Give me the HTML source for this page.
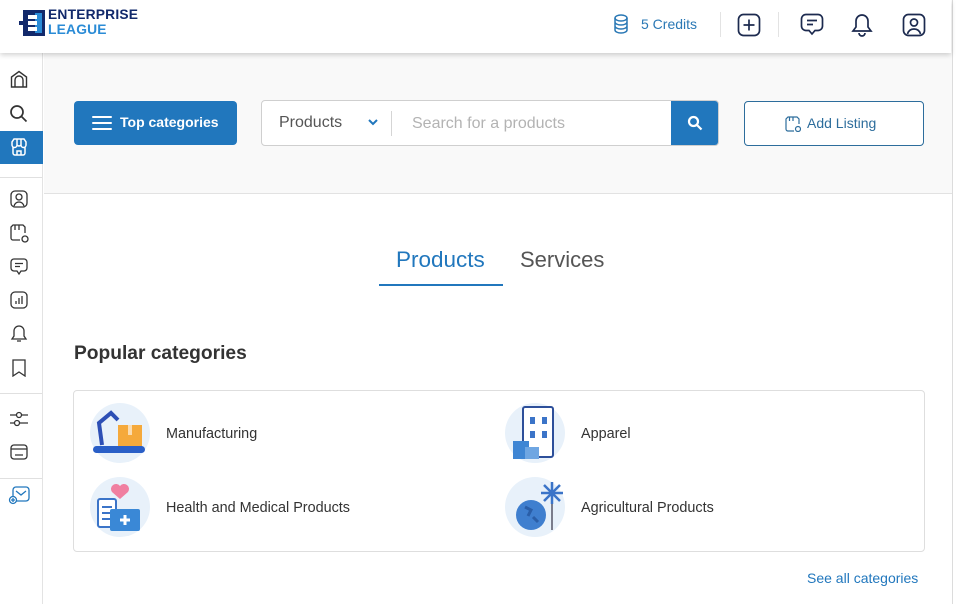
<!DOCTYPE html>
<html><head><meta charset="utf-8"><style>
*{box-sizing:border-box;margin:0;padding:0}
body{width:956px;height:604px;overflow:hidden;background:#fff;font-family:"Liberation Sans",sans-serif;position:relative;color:#333}
.abs{position:absolute}
#hdr{left:0;top:0;width:951px;height:53px;background:#fff;box-shadow:0 2px 5px rgba(0,0,0,.18);z-index:5}
#side{left:0;top:53px;width:43px;height:551px;background:#fff;border-right:1px solid #e3e3e3}
#band{left:44px;top:53px;width:908px;height:141px;background:#f9f9f9;border-bottom:1px solid #e2e2e2}
#rline{left:952px;top:0;width:1px;height:604px;background:#dcdcdc}
.ico{position:absolute}
.hr{position:absolute;left:0;width:42px;height:1px;background:#e0e0e0}
.cat{position:absolute;font-size:14.4px;color:#333}
.circ{position:absolute;width:60px;height:60px;border-radius:50%;background:#e8f1fa}
</style></head><body>
<div id="rline" class="abs"></div>
<div id="hdr" class="abs">
 <svg class="ico" style="left:19px;top:9px" width="28" height="28" viewBox="0 0 28 28">
  <rect x="4" y="1" width="22" height="26" fill="#12296b"/><rect x="16" y="4" width="7" height="20" fill="#2a8bd6"/>
  <rect x="9" y="6" width="9" height="4" fill="#fff"/><rect x="9" y="12" width="9" height="4" fill="#fff"/><rect x="9" y="18" width="9" height="4" fill="#fff"/>
  <rect x="0" y="12" width="6" height="4" fill="#12296b"/>
 </svg>
 <div class="abs" style="left:48px;top:8px;font-weight:bold;font-size:13.8px;line-height:14px;color:#12296b;letter-spacing:.2px">ENTERPRISE</div>
 <div class="abs" style="left:48px;top:23px;font-weight:bold;font-size:13.8px;line-height:14px;color:#2a8bd6;letter-spacing:.2px">LEAGUE</div>
 <svg class="ico" style="left:613px;top:14px" width="16" height="21" viewBox="0 0 16 21" fill="none" stroke="#2a78b5" stroke-width="1.5"><ellipse cx="8" cy="4" rx="6" ry="3"/><path d="M2 4v12c0 1.7 2.7 3 6 3s6-1.3 6-3V4M2 8c0 1.7 2.7 3 6 3s6-1.3 6-3M2 12c0 1.7 2.7 3 6 3s6-1.3 6-3"/></svg>
 <div class="abs" style="left:641px;top:16px;font-size:14px;color:#2a78b5">5 Credits</div>
 <div class="abs" style="left:720px;top:12px;width:1px;height:25px;background:#e3e3e3"></div>
 <div class="abs" style="left:778px;top:12px;width:1px;height:25px;background:#e3e3e3"></div>
 <svg class="ico" style="left:737px;top:13px" width="24" height="24" viewBox="0 0 24 24" fill="none" stroke="#1c2a4f" stroke-width="1.7"><rect x="1.5" y="1.5" width="21" height="21" rx="5"/><path d="M12 6.5v11M6.5 12h11"/></svg>
 <svg class="ico" style="left:800px;top:13px" width="24" height="24" viewBox="0 0 24 24" fill="none" stroke="#1c2a4f" stroke-width="1.7"><path d="M6 1.5h12a4.5 4.5 0 0 1 4.5 4.5v7a4.5 4.5 0 0 1-4.5 4.5h-3l-3 3.5-3-3.5H6A4.5 4.5 0 0 1 1.5 13V6A4.5 4.5 0 0 1 6 1.5z"/><path d="M7 7.5h10M7 11.5h6"/></svg>
 <svg class="ico" style="left:851px;top:13px" width="22" height="24" viewBox="0 0 22 24" fill="none" stroke="#1c2a4f" stroke-width="1.7"><path d="M11 2a6 6 0 0 1 6 6v6l3 4H2l3-4V8a6 6 0 0 1 6-6zM8 20a3 3 0 0 0 6 0"/></svg>
 <svg class="ico" style="left:902px;top:13px" width="24" height="24" viewBox="0 0 24 24" fill="none" stroke="#1c2a4f" stroke-width="1.7"><rect x="1.5" y="1.5" width="21" height="21" rx="5"/><circle cx="12" cy="9.5" r="3.5"/><path d="M5.5 21c1-3.5 3.5-5 6.5-5s5.5 1.5 6.5 5"/></svg>
</div>
<div id="side" class="abs">
 <svg class="ico" style="left:10px;top:17px" width="18" height="18" viewBox="0 0 18 18" fill="none" stroke="#333" stroke-width="1.4"><path d="M1.5 17V7L9 1.5 16.5 7v10zM5 17v-7a4 4 0 0 1 8 0v7"/></svg>
 <svg class="ico" style="left:9px;top:51px" width="19" height="19" viewBox="0 0 19 19" fill="none" stroke="#333" stroke-width="1.7"><circle cx="8" cy="8" r="6"/><path d="M12.5 12.5l5 5"/></svg>
 <div class="abs" style="left:0;top:78px;width:43px;height:33px;background:#2177bd"></div>
 <svg class="ico" style="left:10px;top:85px" width="18" height="18" viewBox="0 0 18 18" fill="none" stroke="#fff" stroke-width="1.5"><path d="M2 7V4l2-3h10l2 3v3a2.5 2.5 0 0 1-5 0 2.5 2.5 0 0 1-4 0 2.5 2.5 0 0 1-5 0zM3 9v6a2 2 0 0 0 2 2h8a2 2 0 0 0 2-2V9M7 17v-4h4v4M7 1v6M11 1v6"/></svg>
 <div class="hr" style="top:124px"></div>
 <svg class="ico" style="left:10px;top:137px" width="18" height="18" viewBox="0 0 18 18" fill="none" stroke="#333" stroke-width="1.3"><rect x="1" y="1" width="16" height="16" rx="4"/><circle cx="9" cy="7" r="3"/><path d="M4 16c1-3 3-4 5-4s4 1 5 4"/></svg>
 <svg class="ico" style="left:10px;top:171px" width="19" height="19" viewBox="0 0 19 19" fill="none" stroke="#333" stroke-width="1.3"><path d="M1 6V3l2-2h10l2 2v3M1 6v8a2 2 0 0 0 2 2h7M15 6v3M5 1v5M9 1v5"/><circle cx="15" cy="15" r="3"/></svg>
 <svg class="ico" style="left:10px;top:205px" width="18" height="18" viewBox="0 0 18 18" fill="none" stroke="#333" stroke-width="1.3"><path d="M4 1h10a3 3 0 0 1 3 3v6a3 3 0 0 1-3 3h-3l-2 3-2-3H4a3 3 0 0 1-3-3V4a3 3 0 0 1 3-3zM5 5.5h8M5 8.5h5"/></svg>
 <svg class="ico" style="left:10px;top:238px" width="18" height="18" viewBox="0 0 18 18" fill="none" stroke="#333" stroke-width="1.3"><rect x="1" y="1" width="16" height="16" rx="4"/><path d="M6 13v-3M9 13V7M12 13V5"/></svg>
 <svg class="ico" style="left:10px;top:272px" width="18" height="18" viewBox="0 0 18 18" fill="none" stroke="#333" stroke-width="1.3"><path d="M9 1a5 5 0 0 1 5 5v5l2 3H2l2-3V6a5 5 0 0 1 5-5zM7 16h4"/></svg>
 <svg class="ico" style="left:10px;top:306px" width="18" height="18" viewBox="0 0 18 18" fill="none" stroke="#333" stroke-width="1.3"><path d="M3 1h12v16l-6-4-6 4z"/></svg>
 <div class="hr" style="top:340px"></div>
 <svg class="ico" style="left:9px;top:357px" width="20" height="18" viewBox="0 0 20 18" fill="none" stroke="#333" stroke-width="1.3"><path d="M1 5h6M13 5h6M1 13h4M11 13h8"/><circle cx="10" cy="5" r="2.5"/><circle cx="8" cy="13" r="2.5"/></svg>
 <svg class="ico" style="left:10px;top:391px" width="18" height="16" viewBox="0 0 18 16" fill="none" stroke="#333" stroke-width="1.3"><rect x="1" y="1" width="16" height="14" rx="3"/><path d="M1 5h16M5 11h8"/></svg>
 <div class="hr" style="top:425px"></div>
 <svg class="ico" style="left:8px;top:433px" width="22" height="19" viewBox="0 0 22 19" fill="none" stroke="#2177bd" stroke-width="1.3"><rect x="5" y="1" width="16" height="14" rx="3"/><path d="M8 5l5 4 5-4"/><circle cx="5" cy="14" r="3.5" fill="#fff"/><path d="M5 12v4M3 14h4"/></svg>
</div>
<div id="band" class="abs"></div>
<div class="abs" style="left:74px;top:101px;width:163px;height:44px;background:#2177bd;border-radius:4px;color:#fff;font-size:14px;font-weight:bold">
 <svg class="ico" style="left:18px;top:14px" width="20" height="16" viewBox="0 0 20 16" stroke="#fff" stroke-width="2" stroke-linecap="round"><path d="M1 2h18M1 8h18M1 14h18"/></svg>
 <span class="abs" style="left:46px;top:13px">Top categories</span>
</div>
<div class="abs" style="left:261px;top:100px;width:458px;height:46px;background:#fff;border:1px solid #cfcfcf;border-radius:4px;overflow:hidden">
 <span class="abs" style="left:17px;top:13px;font-size:16px;color:#555">Products</span>
 <svg class="ico" style="left:105px;top:17px" width="12" height="8" viewBox="0 0 12 8" fill="none" stroke="#2177bd" stroke-width="2"><path d="M2 2l4 4 4-4"/></svg>
 <div class="abs" style="left:129px;top:10px;width:1px;height:25px;background:#d5d5d5"></div>
 <span class="abs" style="left:150px;top:14px;font-size:16px;color:#b3b3b3">Search for a products</span>
 <div class="abs" style="left:409px;top:-1px;width:48px;height:46px;background:#2177bd">
  <svg class="ico" style="left:16px;top:15px" width="16" height="16" viewBox="0 0 16 16" fill="none" stroke="#fff" stroke-width="2.2"><circle cx="6.5" cy="6.5" r="4.5"/><path d="M10 10l4.5 4.5"/></svg>
 </div>
</div>
<div class="abs" style="left:744px;top:101px;width:180px;height:45px;border:1px solid #2d6d9c;border-radius:4px;background:#fff">
 <svg class="ico" style="left:40px;top:14px" width="16" height="16" viewBox="0 0 16 16" fill="none" stroke="#2d6d9c" stroke-width="1.2"><path d="M1 5V3l2-2h9l2 2v2M1 5v8a2 2 0 0 0 2 2h6M14 5v3M4.5 1v4M8 1v4"/><circle cx="13" cy="13" r="2.5"/></svg>
 <span class="abs" style="left:62px;top:13px;font-size:14px;color:#2d6d9c">Add Listing</span>
</div>
<div class="abs" style="left:396px;top:247px;font-size:22.5px;color:#2177bd">Products</div>
<div class="abs" style="left:520px;top:247px;font-size:22px;color:#555">Services</div>
<div class="abs" style="left:379px;top:284px;width:124px;height:2px;background:#2177bd"></div>
<div class="abs" style="left:74px;top:343px;font-size:19.2px;font-weight:bold;color:#333">Popular categories</div>
<div class="abs" style="left:73px;top:390px;width:852px;height:162px;border:1px solid #dedede;border-radius:4px"></div>
<div class="circ" style="left:90px;top:403px"></div>
<svg class="ico" style="left:90px;top:403px" width="60" height="60" viewBox="0 0 60 60"><rect x="28" y="22" width="24" height="22" fill="#f5a93b"/><rect x="38" y="22" width="4" height="10" fill="#fff" opacity=".6"/><path d="M12 42L9 20l12-10 7 7" stroke="#2d4fb5" stroke-width="4" fill="none"/><rect x="3" y="43" width="52" height="7" rx="3.5" fill="#2a5fc7"/></svg>
<div class="cat" style="left:166px;top:426px">Manufacturing</div>
<div class="circ" style="left:90px;top:477px"></div>
<svg class="ico" style="left:90px;top:477px" width="60" height="60" viewBox="0 0 60 60"><path d="M30 22l-8-7a5 5 0 0 1 8-6 5 5 0 0 1 8 6z" fill="#f07fa0"/><rect x="8" y="22" width="18" height="28" rx="2" fill="#fff" stroke="#3b74c8" stroke-width="2"/><path d="M12 30h10M12 36h10M12 42h8" stroke="#3b74c8" stroke-width="2"/><rect x="20" y="32" width="30" height="22" rx="2" fill="#3a88d6"/><path d="M35 38v10M30 43h10" stroke="#fff" stroke-width="3"/></svg>
<div class="cat" style="left:166px;top:500px">Health and Medical Products</div>
<div class="circ" style="left:505px;top:403px"></div>
<svg class="ico" style="left:505px;top:403px" width="60" height="60" viewBox="0 0 60 60"><rect x="18" y="4" width="30" height="50" rx="2" fill="#fff" stroke="#2d4f9a" stroke-width="2"/><rect x="25" y="14" width="5" height="7" fill="#3b74c8"/><rect x="37" y="14" width="5" height="7" fill="#3b74c8"/><rect x="25" y="28" width="5" height="7" fill="#3b74c8"/><rect x="37" y="28" width="5" height="7" fill="#3b74c8"/><rect x="8" y="38" width="16" height="18" fill="#3f86d4"/><rect x="20" y="44" width="14" height="12" fill="#6fa6e2"/></svg>
<div class="cat" style="left:581px;top:426px">Apparel</div>
<div class="circ" style="left:505px;top:477px"></div>
<svg class="ico" style="left:505px;top:477px" width="60" height="60" viewBox="0 0 60 60"><circle cx="26" cy="38" r="15" fill="#3f7fcf"/><path d="M20 30l6 3-3 6M28 40l5 5" stroke="#2a5ea8" stroke-width="3" fill="none"/><path d="M47 5v22M36 16h22M39 8l16 16M55 8L39 24" stroke="#3b74c8" stroke-width="2.5"/><path d="M47 27v26" stroke="#556" stroke-width="1.5"/></svg>
<div class="cat" style="left:581px;top:500px">Agricultural Products</div>
<div class="abs" style="left:807px;top:570px;font-size:14px;color:#2177bd">See all categories</div>
</body></html>
